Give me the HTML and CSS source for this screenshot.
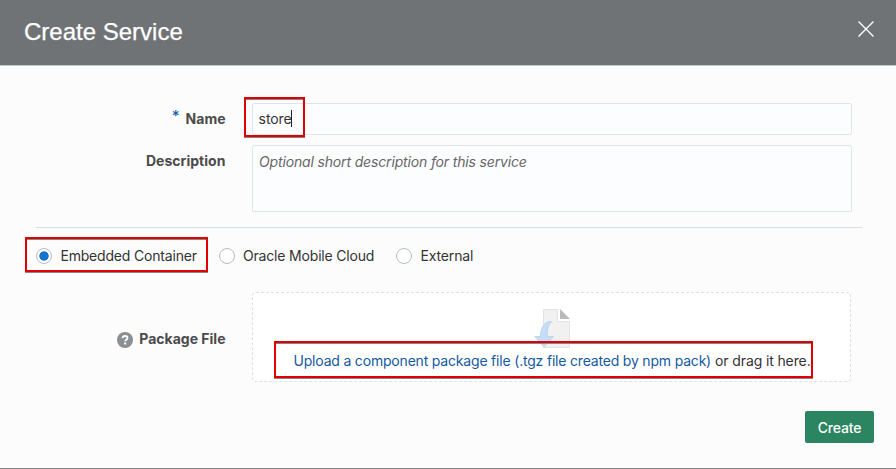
FILE: index.html
```html
<!DOCTYPE html>
<html lang="en">
<head>
<meta charset="utf-8">
<title>Create Service</title>
<link rel="stylesheet" href="styles.css">
</head>
<body>
<main class="dialog">
  <header class="header">
    <h1 class="title">Create Service</h1>
    <svg class="close" width="16" height="16" viewBox="0 0 16 16" aria-hidden="true"><path d="M.5.5l15 15M15.5.5l-15 15"/></svg>
  </header>
  <form class="form">
    <div class="row row-name">
      <div class="label"><span class="required">*</span><span class="label-name">Name</span></div>
      <div class="field field-name"><span class="value">store</span><i class="caret"></i><i class="mark mark-name"></i></div>
    </div>
    <div class="row row-description">
      <div class="label"><span class="label-description">Description</span></div>
      <div class="field field-description"><span class="placeholder">Optional short description for this service</span></div>
    </div>
    <div class="divider"></div>
    <div class="radios">
      <div class="radio radio-embedded"><i class="dot checked"></i><span>Embedded Container</span><i class="mark mark-radio"></i></div>
      <div class="radio radio-mobile"><i class="dot"></i><span>Oracle Mobile Cloud</span></div>
      <div class="radio radio-external"><i class="dot"></i><span>External</span></div>
    </div>
    <div class="row row-package">
      <div class="label">
        <svg class="help" width="16" height="16" viewBox="0 0 16 16" aria-hidden="true"><circle cx="8" cy="8" r="8" fill="#8a8f93"/><path d="M5.600 6.100C5.700 4.700 6.600 4 8 4c1.500 0 2.500.8 2.500 2 0 1.700-2.300 1.700-2.300 3.300" fill="none" stroke="#fff" stroke-width="1.900"/><rect x="7.100" y="10.500" width="2.100" height="2" fill="#fff"/></svg>
        <span class="label-package">Package File</span>
      </div>
      <div class="drop">
        <svg class="file" width="38" height="40" viewBox="0 0 38 40" aria-hidden="true"><path d="M9.500.5h14v12h12v26h-26z" fill="#f1f1f1" stroke="#e3e3e3"/><path d="M26 0v10h10z" fill="#bababa"/><path d="M17.500 12.500C12 12 7 16 6.300 27.500H.8L10 38l9.500-10.500h-6c-.8-6 .5-11 4-15z" fill="#c5ddf6" stroke="#b5cfeb" stroke-width=".8"/></svg>
        <div class="drop-text"><span class="link">Upload a component package file (.tgz file created by npm pack)</span><span class="drag">or drag it here.</span></div>
        <i class="mark mark-upload"></i>
      </div>
    </div>
    <div class="actions"><button class="create" type="button">Create</button></div>
  </form>
</main>
</body>
</html>
```
FILE: styles.css
```css
* { box-sizing: border-box; }
body { margin: 0; font: 14px/20px Inter, "Liberation Sans", sans-serif; color: #333; }
.dialog { width: 896px; height: 469px; overflow: hidden; background: #fcfcfc; border-bottom: 1px solid #858585; }
.header { height: 66px; padding: 0 22px 0 24px; display: flex; justify-content: space-between; background: #6f7375; border-bottom: 1px solid #c3c9ce; }
.title { margin: 17px 0 0; font: 24px/30px "Liberation Sans", sans-serif; color: #fff; -webkit-text-stroke: .25px #fff; }
.close { margin-top: 21px; fill: none; stroke: #fff; stroke-width: 1.4; }
.form { padding-top: 37px; }
.row { display: flex; }
.label { width: 225.5px; margin-right: 26.5px; display: flex; justify-content: flex-end; font-weight: 700; color: #4b4b4b; white-space: nowrap; }
.required { margin: -3px 6px 0 0; font-size: 15px; font-weight: 500; color: #1464b0; }
.row-name { height: 42px; }
.row-name .label { padding-top: 6px; }
.row-description { height: 67px; }
.row-description .label { padding-top: 6px; }
.label-description { letter-spacing: .04px; }
.field { position: relative; width: 600px; border: 1px solid #dfe4e7; border-radius: 2px; background: #fcfdfe; white-space: nowrap; }
.field-name { height: 32px; padding: 5px 6px; display: flex; }
.value { margin-left: -.4px; letter-spacing: -.12px; }
.caret { width: 1px; height: 17px; margin-top: 1px; background: #222; }
.field-description { height: 67px; padding: 6px; }
.placeholder { font-style: italic; color: #666; letter-spacing: -.155px; }
.divider { width: 826px; height: 1px; margin: 15px 0 0 36px; background: #d6dfe6; }
.radios { display: flex; height: 64px; padding: 18px 0 0 36px; }
.radio { position: relative; height: 20px; display: flex; gap: 8px; white-space: nowrap; letter-spacing: -.18px; }
.radio-embedded { width: 183px; }
.radio-mobile { width: 177px; }
.radio-external { letter-spacing: -.12px; }
.radio-embedded span, .radio-external span { margin-left: .4px; }
.dot { width: 16px; height: 16px; margin-top: 2px; border: 1px solid #b5bec6; border-radius: 50%; background: #fff; flex: none; }
.checked { background: radial-gradient(circle, #1474d0 4.3px, #fff 5px); }
.row-package .label { padding-top: 37px; gap: 6px; }
.help { margin-top: 3px; }
.drop { position: relative; width: 599px; height: 90px; padding-top: 16px; border: 1px dashed #dbe1e6; border-radius: 4px; background: #fff; display: flex; flex-direction: column; }
.file { margin-left: 281px; flex: none; }
.drop-text { margin: 2px 0 0 40.5px; display: flex; gap: 4px; white-space: nowrap; }
.link { color: #145a9f; letter-spacing: -.19px; }
.drag { letter-spacing: -.12px; }
.mark { position: absolute; border: 2px solid #e00000; box-shadow: 0 1px 0 #858585, inset 0 1px 0 #858585; }
.mark-name { left: -9px; top: -7px; width: 61px; height: 40px; }
.mark-radio { left: -11px; top: -9px; width: 183px; height: 35px; }
.mark-upload { left: 21px; top: 48px; width: 539px; height: 37px; }
.actions { display: flex; justify-content: flex-end; padding: 29px 22px 0 0; }
.create { width: 69px; height: 32px; padding: 2px 0 0; border: 0; border-radius: 2px; background: #2a8560; color: #fff; font: 500 14px/20px Inter, sans-serif; letter-spacing: -.2px; }
```
